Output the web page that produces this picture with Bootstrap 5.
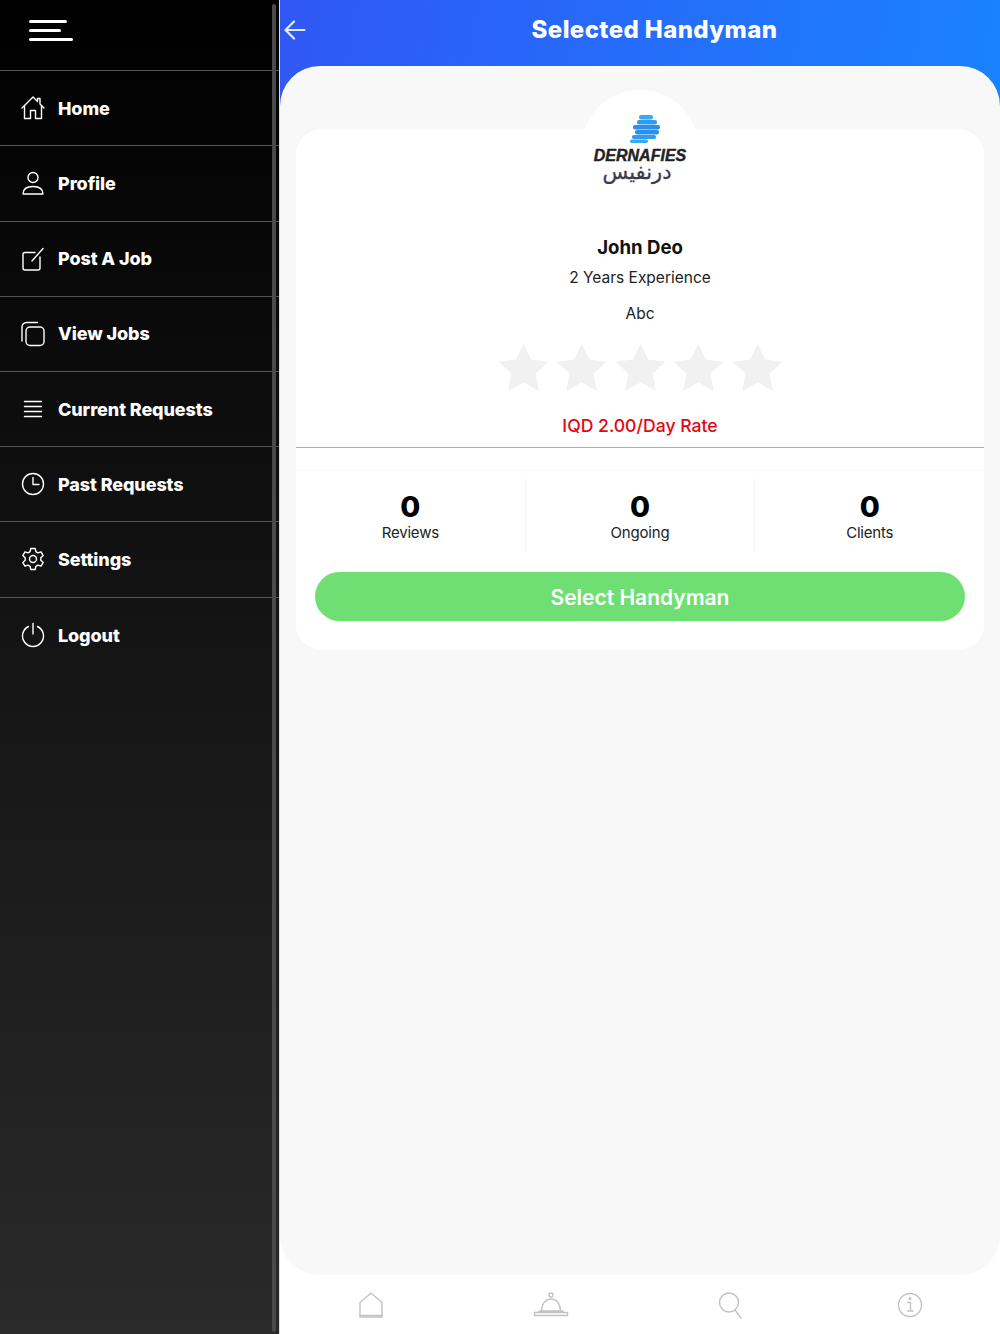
<!DOCTYPE html>
<html lang="en">
<head>
<meta charset="utf-8">
<title>Selected Handyman</title>
<link href="https://cdn.jsdelivr.net/npm/bootstrap@5.3.0/dist/css/bootstrap.min.css" rel="stylesheet">
<style>
html,body{height:1334px;overflow:hidden;background:#fff}
body{font-family:"Inter","Liberation Sans",sans-serif;color:#111}
.shell{width:1000px;height:1334px}
.side{width:280px;height:1334px;background:linear-gradient(180deg,#000 0,#2a2a2a 100%);flex:none;position:relative;border-right:1px solid #ddd}
.side-bar{position:absolute;left:272px;top:4px;bottom:2px;width:4px;background:#4a4a4a;border-radius:2px}
.burger{height:71.200px;padding:20px 0 0 29px;border-bottom:1px solid #555}
.burger i{display:block;height:3px;background:#fff;border-radius:2px;margin-bottom:6px}
.burger i:nth-child(1){width:38px}.burger i:nth-child(2){width:32px}.burger i:nth-child(3){width:44px}
.mitem{height:75.2px;border-bottom:1px solid #555;padding-left:21px;gap:13px;color:#fff;font-weight:800;font-size:18px;letter-spacing:-.1px}
.mitem:last-child{border-bottom:0}
.mitem svg{width:24px;height:26px;flex:none;fill:none;stroke:#fff;stroke-width:1.4;stroke-linecap:round;stroke-linejoin:round}
.main{flex:1;min-width:0;height:1334px;background:#fff}
.top{height:106px;background:linear-gradient(100deg,#3057f5 0,#1a82ff 100%);padding:0 0 46px 4px;color:#fff}
.top svg{width:22px;height:22px;fill:none;stroke:#e6ebff;stroke-width:2.2;stroke-linecap:round;stroke-linejoin:round}
.top-title{font-weight:800;font-size:24px;letter-spacing:.4px;margin-left:3px;flex:1;text-align:center;line-height:60px}
.panel{margin-top:-40px;height:1209px;background:#f8f8f8;border-radius:40px;padding:24px 16px 0}
.bubble{width:118px;height:118px;border-radius:50%;background:#fff;margin:0 auto -79px;position:relative;z-index:0}
.sheet{background:#fff;border-radius:26px;height:521px;position:relative;padding-top:99px;text-align:center}
.logo{position:absolute;left:50%;top:-14px;transform:translateX(-50%);width:120px;text-align:center}
.logo svg{display:block;margin:0 auto;width:30px;height:28px;position:relative;left:5px;filter:blur(.5px)}
.logo-en{font-family:"Liberation Sans",sans-serif;font-weight:700;font-style:italic;font-size:16px;line-height:15px;color:#222;margin-top:5px;-webkit-text-stroke:.4px #222}
.logo-ar{font-family:"DejaVu Sans",sans-serif;font-size:21px;line-height:22px;color:#3a3a4a;margin-top:-2px;position:relative;left:-3px;-webkit-text-stroke:.3px #3a3a4a}
.who{font-size:18.6px;font-weight:700;line-height:38px;color:#111}
.meta{font-size:15.5px;line-height:24px;color:#222}
.meta-gap{margin-top:12px}
.stars{gap:5.500px;margin-top:16px;height:56px}
.stars svg{width:53px;height:52px;fill:#f1f1f1}
.rate{color:#e30613;font-size:17.600px;font-weight:500;line-height:26px;margin-top:15px}
.rule{border-top:1px solid #62c9ee;margin-top:8px}
.stats{border-top:1px solid #f6f6f6;margin-top:22px;padding-top:7px}
.stat{flex:1;height:75px;border-right:1px solid #f4f4f4;padding-top:13px}
.stat:last-child{border-right:0}
.stat b{display:block;font-size:29px;line-height:32px;font-weight:800;color:#000}
.stat span{font-size:15px;letter-spacing:-.2px;line-height:20px;color:#222;display:block}
.cta{display:block;background:#6fdf73;color:#fff;font-weight:600;font-size:21px;border:0;border-radius:25px;height:49px;margin:19px 19px 0;width:650px;padding-top:4px}
.dock{height:59px;padding:0 0 0 1px}
.dock span{flex:1;text-align:center}
.dock svg{width:40px;height:30px;fill:none;stroke:#c2c2c2;stroke-width:1.4;stroke-linecap:round;stroke-linejoin:round}
</style>
</head>
<body>
<div class="shell d-flex">
  <aside class="side">
    <div class="side-bar"></div>
    <div class="burger"><i></i><i></i><i></i></div>
    <div class="mitem d-flex align-items-center"><svg viewBox="0 0 24 26"><path d="M1 13 12 2l4.500 4.500V3.500h2.500v5.500L23 13"/><path d="M3.500 11v12.500h6V15.500h5v8h6V11"/></svg>Home</div>
    <div class="mitem d-flex align-items-center"><svg viewBox="0 0 24 26"><circle cx="12" cy="7.500" r="5"/><path d="M2 24c0-5.500 4.500-7.500 10-7.500s10 2 10 7.500z"/></svg>Profile</div>
    <div class="mitem d-flex align-items-center"><svg viewBox="0 0 24 26"><path d="M14 6.500H4a2 2 0 0 0-2 2V22a2 2 0 0 0 2 2h13a2 2 0 0 0 2-2V11"/><path d="M11 15 22 2.500"/></svg>Post A Job</div>
    <div class="mitem d-flex align-items-center"><svg viewBox="0 0 24 26"><path d="M1 20V6a4.500 4.500 0 0 1 4.500-4.500h11"/><rect x="5" y="6" width="18" height="18.500" rx="4"/></svg>View Jobs</div>
    <div class="mitem d-flex align-items-center"><svg viewBox="0 0 24 26"><path d="M3.500 5.500h17M3.500 10.500h17M3.500 15.500h17M3.500 20.500h17"/></svg>Current Requests</div>
    <div class="mitem d-flex align-items-center"><svg viewBox="0 0 24 26"><circle cx="12" cy="13" r="10.500"/><path d="M12 6.500V13.500h6"/></svg>Past Requests</div>
    <div class="mitem d-flex align-items-center"><svg viewBox="0 0 24 26"><circle cx="12" cy="13" r="3.500"/><path d="M9.800 2.500h4.400l.7 3.200 2 1.100 3.100-1 2.200 3.800-2.400 2.200v2.400l2.400 2.200-2.200 3.800-3.100-1-2 1.100-.7 3.200H9.800l-.7-3.200-2-1.100-3.100 1-2.200-3.800 2.400-2.200v-2.400L1.800 9.600 4 5.800l3.100 1 2-1.100z"/></svg>Settings</div>
    <div class="mitem d-flex align-items-center"><svg viewBox="0 0 24 26"><path d="M7.500 4.500a10.500 10.500 0 1 0 9 0"/><path d="M12 1.500V12"/></svg>Logout</div>
  </aside>
  <main class="main d-flex flex-column">
    <header class="top d-flex align-items-center">
      <svg viewBox="0 0 22 22"><path d="M20.500 11H2M10 2.500 1.500 11l8.500 8.500"/></svg>
      <div class="top-title">Selected Handyman</div>
    </header>
    <section class="panel">
      <div class="bubble"></div>
      <div class="sheet">
        <div class="logo">
          <svg viewBox="0 0 30 28"><rect x="9" y="0" width="14" height="4.500" rx="2" fill="#3aa8f5"/><rect x="7" y="5" width="20" height="4.500" rx="2" fill="#2f9cf2"/><rect x="3" y="10" width="27" height="4.500" rx="2" fill="#2a8eec"/><rect x="5" y="15" width="24" height="4.500" rx="2" fill="#2a8eec"/><rect x="2" y="20" width="24" height="4" rx="1.700" fill="#2f9cf2"/><rect x="0" y="24.500" width="18" height="3.500" rx="1.700" fill="#3aa8f5"/></svg>
          <div class="logo-en">DERNAFIES</div>
          <div class="logo-ar" dir="rtl" lang="ar">درنفيس</div>
        </div>
        <div class="who">John Deo</div>
        <div class="meta">2 Years Experience</div>
        <div class="meta meta-gap">Abc</div>
        <div class="stars d-flex justify-content-center">
          <svg viewBox="0 0 24 24"><path d="M12 .8l3.500 7.300 8 1-5.900 5.500 1.500 8L12 18.700l-7.100 3.900 1.500-8L.5 9.100l8-1z"/></svg>
          <svg viewBox="0 0 24 24"><path d="M12 .8l3.500 7.300 8 1-5.900 5.500 1.500 8L12 18.700l-7.100 3.900 1.500-8L.5 9.100l8-1z"/></svg>
          <svg viewBox="0 0 24 24"><path d="M12 .8l3.500 7.300 8 1-5.900 5.500 1.500 8L12 18.700l-7.100 3.900 1.500-8L.5 9.100l8-1z"/></svg>
          <svg viewBox="0 0 24 24"><path d="M12 .8l3.500 7.300 8 1-5.900 5.500 1.500 8L12 18.700l-7.100 3.900 1.500-8L.5 9.100l8-1z"/></svg>
          <svg viewBox="0 0 24 24"><path d="M12 .8l3.500 7.300 8 1-5.900 5.500 1.500 8L12 18.700l-7.100 3.900 1.500-8L.5 9.100l8-1z"/></svg>
        </div>
        <div class="rate">IQD 2.00/Day Rate</div>
        <div class="rule"></div>
        <div class="stats d-flex">
          <div class="stat"><b>0</b><span>Reviews</span></div>
          <div class="stat"><b>0</b><span>Ongoing</span></div>
          <div class="stat"><b>0</b><span>Clients</span></div>
        </div>
        <button class="cta" type="button">Select Handyman</button>
      </div>
    </section>
    <nav class="dock d-flex align-items-center">
      <span><svg viewBox="0 0 40 30"><path d="M9 27V12.500L20 3l11 9.500V27z"/><path d="M9 25.500h22"/></svg></span>
      <span><svg viewBox="0 0 40 30"><circle cx="20" cy="5" r="2"/><path d="M10.500 21c0-7 4-12 9.500-12s9.500 5 9.500 12zM3.500 22.500h33v3h-33zM8 21h24"/></svg></span>
      <span><svg viewBox="0 0 40 30"><circle cx="19" cy="12.500" r="9.500"/><path d="M25 20l6 8"/></svg></span>
      <span><svg viewBox="0 0 40 30"><circle cx="20" cy="15" r="11.500"/><path d="M18 12.500h2.500V21M17.500 21h5.500"/><circle cx="20" cy="8.500" r=".8"/></svg></span>
    </nav>
  </main>
</div>
<script src="https://cdn.jsdelivr.net/npm/bootstrap@5.3.0/dist/js/bootstrap.bundle.min.js"></script>
</body>
</html>
